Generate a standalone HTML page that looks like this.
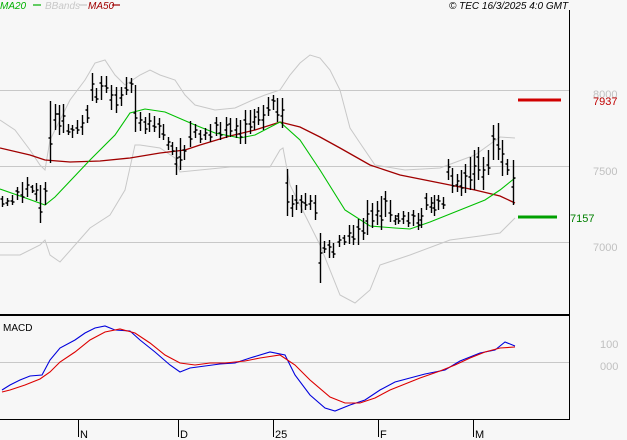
<!DOCTYPE html>
<html><head><meta charset="utf-8"><style>
html,body{margin:0;padding:0;background:#f7f7f7;}
body{width:627px;height:440px;overflow:hidden;position:relative;font-family:"Liberation Sans",sans-serif;}
svg{position:absolute;left:0;top:0;}
</style></head><body>
<svg width="627" height="440" viewBox="0 0 627 440" xmlns="http://www.w3.org/2000/svg" font-family="Liberation Sans, sans-serif">
<rect width="627" height="440" fill="#f7f7f7"/>
<g stroke="#c8c8c8" stroke-width="1">
<line x1="0" y1="90.5" x2="569" y2="90.5"/>
<line x1="0" y1="166.5" x2="569" y2="166.5"/>
<line x1="0" y1="242.5" x2="569" y2="242.5"/>
<line x1="0" y1="362.5" x2="569" y2="362.5"/>
</g>
<g fill="none" stroke="#c8c8c8" stroke-width="1">
<polyline points="0,120 15,130 30,150 40,165 45,170 50,140 70,100 85,80 95,63 105,60 115,75 125,85 140,75 150,70 160,75 175,80 185,95 195,105 215,110 235,108 255,99 265,95 280,90 290,75 300,63 310,55 320,58 330,70 340,90 350,128 360,143 375,165 405,170 440,168 475,155 500,137 515,138"/>
<polyline points="0,255 20,255 40,245 45,240 50,255 60,262 75,245 90,228 110,215 125,190 135,145 140,145 160,148 175,158 180,172 230,167 270,167 280,150 283,148 290,185 305,215 320,245 340,295 355,303 370,290 380,265 410,255 450,240 480,236 500,233 515,218"/>
</g>
<polyline fill="none" stroke="#a00000" stroke-width="1.3" points="0,148 30,155 45,160 70,162 100,161 130,158 160,153 185,150 200,145 230,136 255,130 280,122 300,127 320,137 340,148 370,165 400,175 440,183 475,190 500,196 515,203"/>
<polyline fill="none" stroke="#00c000" stroke-width="1.1" points="0,189 20,196 45,205 55,197 90,160 115,135 130,113 145,109 165,112 195,125 215,133 240,138 255,135 280,122 300,140 320,170 345,210 370,226 395,228 410,229 430,222 455,212 485,200 500,190 515,178"/>
<path id="bars" fill="none" stroke="#000" stroke-width="1.4" d=""/>
<line x1="518" y1="100" x2="561" y2="100" stroke="#d00000" stroke-width="3"/>
<line x1="518" y1="217" x2="557" y2="217" stroke="#00a000" stroke-width="3"/>
<polyline fill="none" stroke="#0000dd" stroke-width="1.1" points="2,390 10,385 20,380 30,376 42,375 50,360 60,348 75,340 85,333 95,328 105,326 115,330 130,331 140,340 155,352 170,365 180,372 190,368 205,366 220,364 235,363 250,358 270,352 285,355 295,375 310,395 325,408 335,411 350,405 365,400 380,390 395,382 410,378 425,374 445,370 460,361 480,353 495,350 505,342 515,346"/>
<polyline fill="none" stroke="#dd0000" stroke-width="1.1" points="2,392 10,390 25,385 40,379 50,372 60,362 75,352 90,340 105,332 120,329 135,333 150,343 165,355 180,363 195,365 210,363 225,363 245,361 260,358 280,355 295,365 310,380 330,397 345,403 360,403 375,398 390,390 405,384 420,378 440,371 455,365 470,358 485,352 500,348 515,347"/>
<line x1="0" y1="315" x2="569" y2="315" stroke="#000" stroke-width="2"/>
<line x1="569.5" y1="10" x2="569.5" y2="420" stroke="#000" stroke-width="1"/>
<line x1="0" y1="419.5" x2="570" y2="419.5" stroke="#000" stroke-width="1"/>
<g stroke="#000" stroke-width="1">
<line x1="78.5" y1="420" x2="78.5" y2="437"/>
<line x1="178.5" y1="420" x2="178.5" y2="437"/>
<line x1="273.5" y1="420" x2="273.5" y2="437"/>
<line x1="378.5" y1="420" x2="378.5" y2="437"/>
<line x1="473.5" y1="420" x2="473.5" y2="437"/>
</g>
<g font-size="11" fill="#000">
<text x="80" y="438">N</text>
<text x="180" y="438">D</text>
<text x="275" y="438">25</text>
<text x="380" y="438">F</text>
<text x="475" y="438">M</text>
</g>
<text x="3" y="331" font-size="10" fill="#000">MACD</text>
<g font-size="10" font-style="italic">
<text x="0" y="9" fill="#00b000">MA20</text>
<line x1="33" y1="5" x2="41" y2="5" stroke="#00b000" stroke-width="1.2"/>
<text x="45" y="9" fill="#c8c8c8">BBands</text>
<line x1="79" y1="5" x2="87" y2="5" stroke="#c8c8c8" stroke-width="1.2"/>
<text x="88" y="9" fill="#a00000">MA50</text>
<line x1="112" y1="5" x2="120" y2="5" stroke="#a00000" stroke-width="1.2"/>
<text x="449" y="9" fill="#000">© TEC 16/3/2025 4:0 GMT</text>
</g>
<g font-size="11" fill="#c0c0c0">
<text x="593" y="98">8000</text>
<text x="593" y="175">7500</text>
<text x="593" y="251">7000</text>
<text x="600" y="348">100</text>
<text x="600" y="370">000</text>
</g>
<text x="593" y="105" font-size="11" fill="#c00000">7937</text>
<text x="570" y="222" font-size="11" fill="#008000">7157</text>
</svg>
<script>
var b=[[2,196,207],[7,198,206],[12,195,205],[17,187,200],[22,182,203],[27,177,197],[32,185,193],[36,183,201],[40,185,223],[45,182,205],[50,101,163],[55,104,130],[59,105,135],[63,104,133],[68,124,135],[72,125,138],[77,120,134],[82,115,135],[87,105,123],[92,73,101],[96,88,103],[101,76,100],[106,76,93],[111,85,110],[116,87,113],[121,87,106],[126,77,95],[131,78,93],[135,85,132],[140,112,131],[145,117,134],[149,113,132],[154,116,132],[159,118,138],[163,124,140],[168,137,150],[172,142,155],[176,147,175],[180,138,170],[184,145,160],[190,121,147],[195,124,138],[200,130,143],[205,128,140],[210,124,142],[216,117,136],[220,122,140],[226,117,138],[230,118,137],[236,118,138],[240,120,144],[245,110,144],[250,110,134],[254,109,130],[258,107,125],[263,105,130],[268,97,116],[273,95,110],[277,98,122],[282,98,128],[287,169,216],[292,195,217],[296,185,210],[301,195,213],[305,193,210],[310,195,210],[315,195,220],[320,233,283],[324,241,253],[329,240,258],[333,243,258],[339,235,247],[344,235,245],[349,225,244],[353,225,245],[358,219,245],[363,218,240],[367,200,235],[372,203,228],[377,201,225],[381,196,230],[385,191,217],[390,200,222],[395,215,225],[398,213,224],[403,211,224],[408,212,227],[413,210,226],[418,213,230],[421,208,228],[426,193,210],[431,197,213],[434,195,216],[438,195,210],[443,197,209],[448,159,180],[452,168,193],[457,174,192],[461,170,196],[465,164,193],[470,157,190],[474,150,190],[478,147,180],[483,157,190],[488,150,175],[493,125,160],[498,123,160],[502,140,176],[507,159,175],[513,160,205]];
var d="";b.forEach(function(r,i){var x=r[0]+.5,o=Math.round(r[1]+(r[2]-r[1])*(i%3==0?0.3:0.6)),c=Math.round(r[1]+(r[2]-r[1])*(i%2?0.4:0.7));d+="M"+x+" "+r[1]+"V"+r[2]+"M"+(x-2)+" "+o+"H"+x+"M"+x+" "+c+"H"+(x+2);});
document.getElementById("bars").setAttribute("d",d);
</script>
</body></html>
